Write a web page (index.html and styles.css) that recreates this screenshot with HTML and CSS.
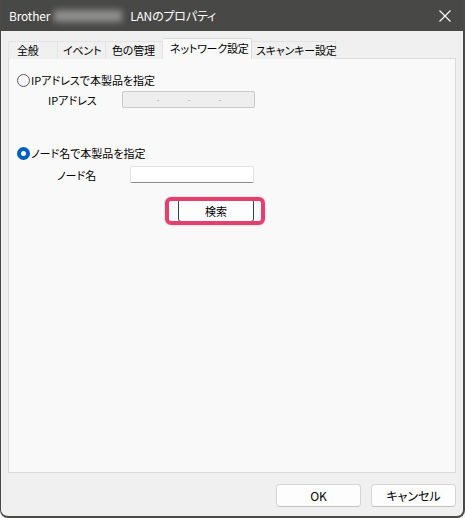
FILE: index.html
```html
<!DOCTYPE html>
<html lang="ja">
<head>
    <meta charset="UTF-8">
    <title>Brother LANのプロパティ</title>
    <link rel="stylesheet" href="styles.css">
</head>
<body>
    <div class="window">

        <!-- Title bar -->
        <div class="titlebar">
            <span class="title">Brother<span class="blurred"></span>LANのプロパティ</span>
            <span class="close">
                <svg width="12" height="12" viewBox="0 0 12 12">
                    <path d="M0.5 0.5 L11.5 11.5 M11.5 0.5 L0.5 11.5" stroke="#ffffff" stroke-width="1.1" fill="none"/>
                </svg>
            </span>
        </div>

        <div class="client">
            <!-- Tabs -->
            <div class="tabs">
                <div class="tab t1">全般</div>
                <div class="tab t2">イベント</div>
                <div class="tab t3">色の管理</div>
                <div class="tab t4 active">ネットワーク設定</div>
                <div class="tab t5">スキャンキー設定</div>
            </div>

            <!-- Tab page -->
            <div class="panel">
                <div class="radio-row first">
                    <span class="radio"></span>
                    <span>IPアドレスで本製品を指定</span>
                </div>
                <div class="field-row ip-row">
                    <span class="field-label">IPアドレス</span>
                    <div class="ip-box">
                        <span>.</span><span>.</span><span>.</span>
                    </div>
                </div>

                <div class="radio-row second">
                    <span class="radio checked"></span>
                    <span>ノード名で本製品を指定</span>
                </div>
                <div class="field-row node-row">
                    <span class="field-label">ノード名</span>
                    <div class="text-box"></div>
                </div>

                <div class="search-row">
                    <div class="search-wrap">
                        <button class="btn default">検索</button>
                        <div class="highlight"></div>
                    </div>
                </div>
            </div>

            <!-- Dialog buttons -->
            <div class="footer">
                <button class="btn wide">OK</button>
                <button class="btn wide">キャンセル</button>
            </div>
        </div>
    </div>
</body>
</html>
```

FILE: styles.css
```css
body {
    margin: 0;
    background: #f3f3f3;
    font-family: "Noto Sans CJK JP", "Noto Sans", sans-serif;
    font-size: 12px;
    color: #000;
}

.window {
    width: 465px;
    height: 518px;
    box-sizing: border-box;
    background: #f0f0f0;
    border-left: 1px solid #4a4a48;
    border-right: 2px solid #4a4a48;
    border-bottom: 2px solid #4a4a48;
    border-radius: 0 0 8px 8px;
    overflow: hidden;
}

/* Title bar */
.titlebar {
    height: 31px;
    background: #484846;
    color: #ffffff;
    display: flex;
    align-items: center;
    justify-content: space-between;
    padding: 0 9px 0 8px;
}

.title {
    display: flex;
    align-items: center;
    font-family: "Noto Sans CJK JP", sans-serif;
    font-size: 12px;
    letter-spacing: -0.2px;
    font-feature-settings: "palt";
}

.blurred {
    display: inline-block;
    width: 68px;
    height: 12px;
    margin: 0 8px 0 4px;
    background: #8e8e8c;
    filter: blur(3px);
}

.close {
    display: flex;
    margin-right: 3px;
}

/* Tabs */
.client {
    padding: 7px 0 0 7px;
}

.tabs {
    display: flex;
    align-items: flex-end;
    height: 21px;
    position: relative;
    z-index: 1;
    margin-bottom: -1px;
}

.tab {
    height: 18px;
    box-sizing: border-box;
    line-height: 17px;
    font-size: 11px;
    white-space: nowrap;
    letter-spacing: -0.2px;
    border: 1px solid #e3e3e3;
    border-bottom: none;
    border-left: none;
    font-feature-settings: "palt";
    background: #f0f0f0;
}

.t1 { width: 50px; padding-left: 8px; border-left: 1px solid #e3e3e3; }
.t2 { width: 48px; padding-left: 5px; }
.t3 { width: 57px; padding-left: 6px; }
.t4 { width: 89px; padding-left: 7px; }
.t5 { width: 84px; padding-left: 4px; }

.tab.active {
    height: 21px;
    line-height: 19px;
    background: #f9f9f9;
    border-color: #dadada;
}

/* Tab page */
.panel {
    width: 448px;
    height: 415px;
    box-sizing: border-box;
    background: #f9f9f9;
    border: 1px solid #dadada;
    padding: 0 0 0 8px;
    font-size: 11px;
}

.radio-row {
    display: flex;
    align-items: center;
    gap: 1px;
    font-feature-settings: "palt";
    height: 14px;
}

.radio-row.first {
    margin-top: 14px;
}

.radio-row.second {
    margin-top: 38px;
}

.radio {
    width: 13px;
    height: 13px;
    box-sizing: border-box;
    border: 1px solid #5a5a5a;
    border-radius: 50%;
    background: #f6f6f6;
}

.radio.checked {
    border: 4px solid #005fb8;
    background: #ffffff;
}

.field-row {
    display: flex;
    align-items: center;
    font-feature-settings: "palt";
}

.ip-row {
    margin-top: 4px;
    padding-left: 31px;
}

.ip-row .field-label {
    width: 74px;
}

.ip-box {
    width: 133px;
    height: 17px;
    box-sizing: border-box;
    border: 1px solid #c9c9c9;
    border-radius: 2px;
    background: #eeeeee;
    display: flex;
    justify-content: space-between;
    padding: 0 33px 0 34px;
    color: #8a8a8a;
    font-size: 8px;
    line-height: 12px;
}

.node-row {
    margin-top: 6px;
    padding-left: 40px;
}

.node-row .field-label {
    width: 73px;
}

.text-box {
    width: 124px;
    height: 17px;
    box-sizing: border-box;
    background: #ffffff;
    border: 1px solid #e3e3e3;
    border-bottom: 1px solid #8a8a8a;
    border-radius: 2px;
}

/* Buttons */
.btn {
    font-family: "Noto Sans CJK JP", "Noto Sans", sans-serif;
    font-size: 12px;
    font-feature-settings: "palt";
    height: 23px;
    padding: 0;
    background: #fdfdfd;
    border: 1px solid #d5d5d5;
    border-bottom-color: #c2c2c2;
    border-radius: 4px;
    color: #000;
}

.search-row {
    margin-top: 16px;
    padding-left: 161px;
}

.search-wrap {
    position: relative;
    width: 76px;
}

.btn.default {
    width: 76px;
    display: block;
    font-size: 11px;
    border: 1px solid #2f4450;
    border-radius: 3px;
}

.highlight {
    position: absolute;
    left: -13px;
    top: -2px;
    width: 100px;
    height: 28px;
    box-sizing: border-box;
    border: 4px solid #e4406f;
    border-radius: 6px;
    box-shadow: 0 0 2px rgba(228, 64, 111, 0.4);
}

.footer {
    display: flex;
    justify-content: flex-end;
    gap: 10px;
    padding: 11px 0 0 0;
    width: 448px;
}

.btn.wide {
    width: 85px;
}
```
